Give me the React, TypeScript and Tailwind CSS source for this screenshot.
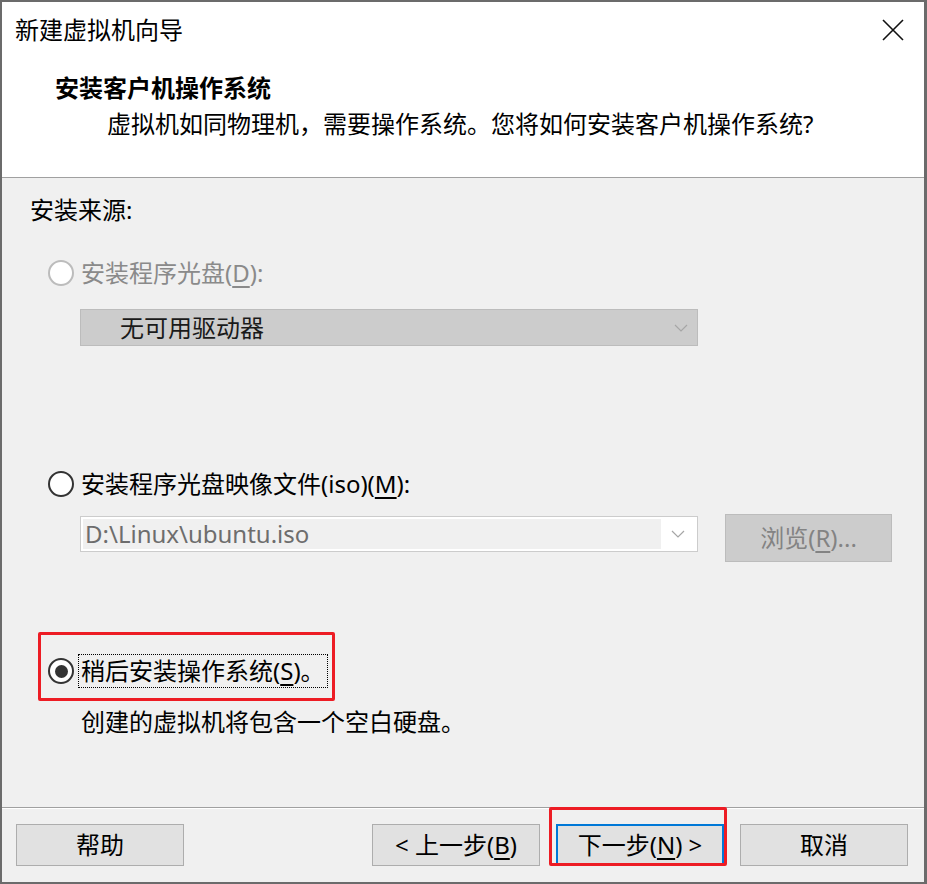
import React from 'react';

const font = { fontFamily: '"Noto Sans", "Noto Sans CJK SC", sans-serif' };

function Chevron({ color = '#a6a6a6' }: { color?: string }) {
  return (
    <svg width="14" height="8" viewBox="0 0 14 8" fill="none">
      <path d="M1 1 L7 7 L13 1" stroke={color} strokeWidth="1.2" />
    </svg>
  );
}

function Radio({ checked, disabled }: { checked?: boolean; disabled?: boolean }) {
  return (
    <span
      className={`flex h-[26px] w-[26px] shrink-0 items-center justify-center rounded-full border-2 bg-white ${
        disabled ? 'border-[#bcbcbc]' : 'border-[#333333]'
      }`}
    >
      {checked && <span className="h-[13px] w-[13px] rounded-full bg-[#333333]" />}
    </span>
  );
}

function Btn({ children, focused }: { children: React.ReactNode; focused?: boolean }) {
  return (
    <button
      className={`flex h-[42px] w-[168px] items-center justify-center bg-[#e1e1e1] text-[24px] text-black ${
        focused ? 'border-2 border-[#0078d7]' : 'border border-[#adadad]'
      }`}
    >
      {children}
    </button>
  );
}

export default function App() {
  return (
    <div
      style={font}
      className="flex h-[884px] w-[927px] flex-col border-2 border-r-[3px] border-[#6b6b6b] bg-white leading-[32px] text-black"
    >
      {/* Title bar */}
      <div className="flex h-[56px] shrink-0 items-center justify-between pl-[13px] pr-[20px]">
        <span className="text-[24px]">新建虚拟机向导</span>
        <svg width="22" height="22" viewBox="0 0 22 22">
          <path d="M1 1 L21 21 M21 1 L1 21" stroke="#111" strokeWidth="1.6" />
        </svg>
      </div>

      {/* Header */}
      <div className="h-[120px] shrink-0 border-b border-[#a0a0a0] pt-[12px]">
        <div className="pl-[53px] text-[24px] font-bold leading-[36px]">安装客户机操作系统</div>
        <div className="pl-[105px] text-[24px] leading-[36px]">
          虚拟机如同物理机，需要操作系统。您将如何安装客户机操作系统?
        </div>
      </div>

      {/* Body */}
      <div className="flex flex-1 flex-col border-b border-[#a0a0a0] bg-[#f0f0f0] pt-[16px] text-[24px]">
        <div className="pl-[28px]">安装来源:</div>

        <div className="mt-[31px] flex items-center gap-[7px] pl-[46px] text-[#8a8a8a]">
          <Radio disabled />
          <span>
            安装程序光盘(<span className="underline underline-offset-4">D</span>):
          </span>
        </div>

        <div className="ml-[78px] mt-[20px] flex h-[37px] w-[618px] items-center justify-between border border-[#bcbcbc] bg-[#cccccc] pl-[39px] pr-[9px]">
          <span className="text-[#1a1a1a]">无可用驱动器</span>
          <Chevron />
        </div>

        <div className="mt-[122px] flex items-center gap-[7px] pl-[46px]">
          <Radio />
          <span>
            安装程序光盘映像文件(iso)(<span className="underline underline-offset-4">M</span>):
          </span>
        </div>

        <div className="ml-[78px] mt-[14px] flex items-start gap-[27px]">
          <div className="mt-[2px] flex h-[36px] w-[618px] border border-[#cccccc] bg-white p-[2px]">
            <div className="flex flex-1 items-center bg-[#f0f0f0] pl-[2px] text-[#6d6d6d]">
              D:\Linux\ubuntu.iso
            </div>
            <div className="flex w-[34px] items-center justify-center">
              <Chevron />
            </div>
          </div>
          <div className="flex h-[48px] w-[167px] items-center justify-center border border-[#bcbcbc] bg-[#cccccc] text-[#838383]">
            浏览(<span className="underline underline-offset-4">R</span>)...
          </div>
        </div>

        <div className="relative mt-[93px] flex items-center gap-[5px] pl-[46px]">
          <Radio checked />
          <span className="px-[2px] outline-1 outline-dotted outline-black">
            稍后安装操作系统(<span className="underline underline-offset-4">S</span>)。
          </span>
          <div className="pointer-events-none absolute left-[36px] top-[-23px] h-[69px] w-[297px] rounded-[2px] border-[3px] border-[#ed1c24]" />
        </div>

        <div className="mt-[19px] pl-[79px]">创建的虚拟机将包含一个空白硬盘。</div>
      </div>

      {/* Footer */}
      <div className="flex h-[74px] shrink-0 items-start border-t border-white bg-[#f0f0f0] pl-[14px] pr-[16px] pt-[15px]">
        <Btn>帮助</Btn>
        <div className="flex-1" />
        <div className="flex gap-[16px]">
          <Btn>
            &lt; 上一步(<span className="underline underline-offset-4">B</span>)
          </Btn>
          <div className="relative">
            <Btn focused>
              下一步(<span className="underline underline-offset-4">N</span>) &gt;
            </Btn>
            <div className="pointer-events-none absolute left-[-7px] top-[-17px] h-[59px] w-[178px] rounded-[2px] border-[3px] border-[#ed1c24]" />
          </div>
          <Btn>取消</Btn>
        </div>
      </div>
    </div>
  );
}
